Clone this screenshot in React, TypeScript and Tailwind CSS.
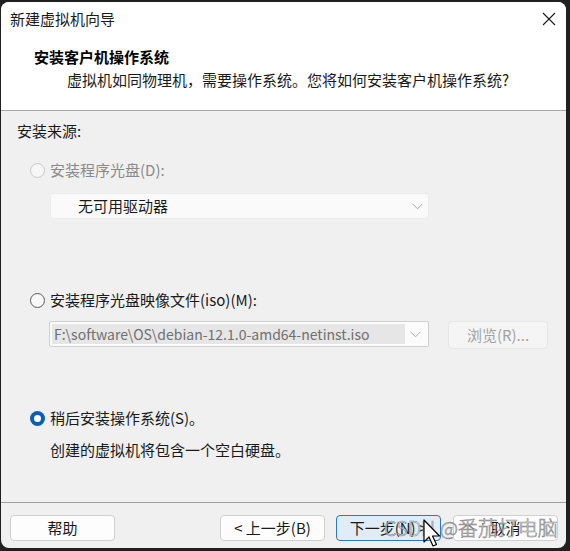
import React from "react";

const font = { fontFamily: '"Noto Sans CJK SC", "Liberation Sans", sans-serif' };

function Radio({ state }: { state: "disabled" | "off" | "on" }) {
  if (state === "on") {
    return (
      <span className="flex h-[15px] w-[15px] items-center justify-center rounded-full bg-[#0a5fb4]">
        <span className="h-[7px] w-[7px] rounded-full bg-white" />
      </span>
    );
  }
  if (state === "disabled") {
    return <span className="block h-[15px] w-[15px] rounded-full border border-[#c8c8c8] bg-[#f6f6f6]" />;
  }
  return <span className="block h-[15px] w-[15px] rounded-full border border-[#5a5a5a] bg-[#f8f8f8]" />;
}

function Chevron({ color }: { color: string }) {
  return (
    <svg width="11" height="7" viewBox="0 0 11 7" fill="none">
      <path d="M0.5 0.8 L5.5 5.8 L10.5 0.8" stroke={color} strokeWidth="1" />
    </svg>
  );
}

function Btn({ children, primary }: { children: React.ReactNode; primary?: boolean }) {
  return (
    <div
      className={
        "flex h-[26px] w-[105px] items-center justify-center rounded-[4px] border text-[15px] leading-[20px] text-[#1a1a1a] " +
        (primary ? "border-[#2a78c9] bg-[#e0ecf8]" : "border-[#d0d0d0] bg-[#fdfdfd]")
      }
    >
      {children}
    </div>
  );
}

export default function App() {
  return (
    <div className="relative h-[551px] w-[570px] overflow-hidden bg-[#202020]" style={font}>
      <div className="ml-[1px] mt-[2px] flex h-[546px] w-[565px] flex-col overflow-hidden rounded-[8px] bg-[#f0f0f0]">
        {/* title + header */}
        <div className="bg-white">
          <div className="flex h-[34px] items-center justify-between pl-[9px] pr-[10px]">
            <span className="text-[15px] leading-[20px] text-[#1a1a1a]">新建虚拟机向导</span>
            <svg width="14" height="14" viewBox="0 0 14 14">
              <path d="M1 1 L13 13 M13 1 L1 13" stroke="#1a1a1a" strokeWidth="1.1" />
            </svg>
          </div>
          <div className="pb-[20px] pl-[33px] pt-[11px]">
            <div className="text-[15px] font-bold leading-[20px] text-black">安装客户机操作系统</div>
            <div className="mt-[3px] pl-[33px] text-[15px] leading-[20px] text-[#1a1a1a]">
              虚拟机如同物理机，需要操作系统。您将如何安装客户机操作系统?
            </div>
          </div>
        </div>
        <div className="h-[1px] bg-[#a8a8a8]" />

        {/* body */}
        <div className="flex-1 pl-[16px] pt-[10px]">
          <div className="text-[15px] leading-[20px] text-[#1a1a1a]">安装来源:</div>

          <div className="ml-[13px] mt-[19px] flex h-[20px] items-center gap-[5px]">
            <Radio state="disabled" />
            <span className="text-[15px] leading-[20px] text-[#8a8a8a]">安装程序光盘(D):</span>
          </div>
          <div className="ml-[33px] mt-[13px] flex h-[26px] w-[379px] items-center justify-between rounded-[3px] border border-[#ececec] bg-[#fafafa] pl-[27px] pr-[5px]">
            <span className="text-[15px] leading-[20px] text-[#1a1a1a]">无可用驱动器</span>
            <Chevron color="#a8a8a8" />
          </div>

          <div className="ml-[13px] mt-[71px] flex h-[20px] items-center gap-[5px]">
            <Radio state="off" />
            <span className="text-[15px] leading-[20px] text-[#1a1a1a]">安装程序光盘映像文件(iso)(M):</span>
          </div>
          <div className="mt-[11px] flex items-start">
            <div className="ml-[32px] flex h-[26px] w-[380px] items-center rounded-[2px] border border-[#cfcfcf] bg-[#fbfbfb] p-[2px]">
              <div className="flex h-[20px] w-[353px] items-center bg-[#e6e6e6] pl-[2px] text-[14px] leading-[20px] text-[#707070]">
                F:\software\OS\debian-12.1.0-amd64-netinst.iso
              </div>
              <div className="flex flex-1 justify-center">
                <Chevron color="#b0b0b0" />
              </div>
            </div>
            <div className="ml-[19px] flex h-[28px] w-[100px] items-center justify-center rounded-[4px] border border-[#e6e6e6] bg-[#f5f5f5] text-[15px] leading-[20px] text-[#a2a2a2]">
              浏览(R)...
            </div>
          </div>

          <div className="ml-[13px] mt-[59px] flex h-[20px] items-center gap-[5px]">
            <Radio state="on" />
            <span className="text-[15px] leading-[20px] text-[#1a1a1a]">稍后安装操作系统(S)。</span>
          </div>
          <div className="ml-[33px] mt-[12px] text-[15px] leading-[20px] text-[#1a1a1a]">
            创建的虚拟机将包含一个空白硬盘。
          </div>
        </div>

        <div className="h-[1px] bg-[#a0a0a0]" />
        {/* footer */}
        <div className="flex h-[45px] items-start pl-[9px] pt-[12px]">
          <Btn>帮助</Btn>
          <div className="ml-[105px]">
            <Btn>&lt; 上一步(B)</Btn>
          </div>
          <div className="ml-[11px]">
            <Btn primary>下一步(N) &gt;</Btn>
          </div>
          <div className="ml-[12px]">
            <Btn>取消</Btn>
          </div>
        </div>
      </div>

      {/* watermark */}
      <div
        className="pointer-events-none absolute left-[384px] top-[515px] whitespace-nowrap text-[20px] font-light leading-[26px] text-[#f4f4f4]/70"
        style={{ WebkitTextStroke: "0.6px rgba(110,110,110,0.85)" }}
      >
        CSDN @番茄打电脑
      </div>
      {/* cursor */}
      <svg className="absolute left-[423px] top-[519px]" width="20" height="30" viewBox="0 0 20 30">
        <path
          d="M1 1 L1 23 L6 18 L10 27 L13.5 25.5 L9.5 17 L16.5 17 Z"
          fill="white"
          stroke="black"
          strokeWidth="1.2"
          strokeLinejoin="round"
        />
      </svg>
    </div>
  );
}
